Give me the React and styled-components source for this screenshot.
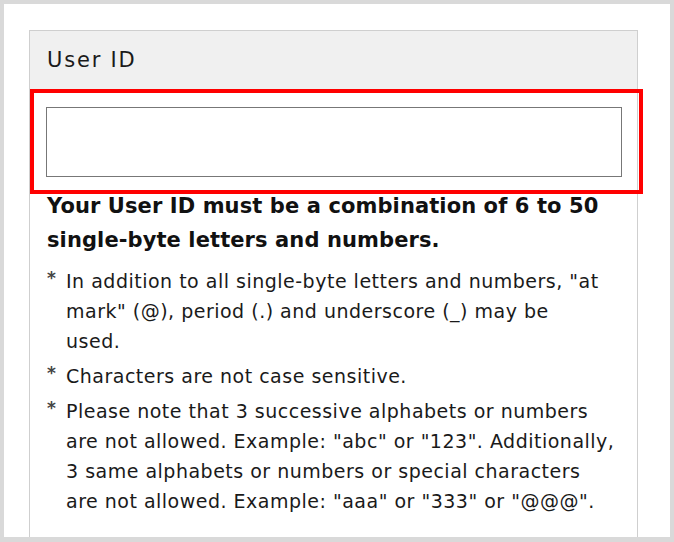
import styled, { createGlobalStyle } from "styled-components";

const GlobalStyle = createGlobalStyle`
  html, body {
    margin: 0;
    padding: 0;
    background: #fff;
  }
  * {
    box-sizing: border-box;
  }
`;

const Frame = styled.div`
  width: 674px;
  height: 542px;
  border: 4px solid #d9d9d9;
  border-bottom-width: 5px;
  background: #fff;
  padding: 26px 32px 0 25px;
  overflow: hidden;
`;

const Panel = styled.section`
  border: 1px solid #cfcfcf;
  border-bottom: none;
  height: 600px;
  font-family: "DejaVu Sans", Verdana, sans-serif;
  color: #111;
`;

const PanelHeader = styled.div`
  height: 58px;
  background: #f0f0f0;
  padding: 0 17px;
  display: flex;
  align-items: center;
  font-size: 21px;
  letter-spacing: 1.8px;
  color: #1a1a1a;
`;

const Highlight = styled.div`
  margin-right: -6px;
  border: 4px solid #ff0000;
  padding: 14px 17px 13px 12px;
`;

const TextInput = styled.input`
  display: block;
  width: 100%;
  height: 70px;
  border: 1.5px solid #777;
  background: #fff;
  outline: none;
`;

const Body = styled.div`
  padding: 0 17px;
`;

const Rule = styled.p`
  margin: -5px 0 0;
  font-size: 21px;
  font-weight: bold;
  line-height: 34px;
  letter-spacing: 0.1px;
`;

const Notes = styled.ul`
  list-style: none;
  margin: 9px 0 0;
  padding: 0;
  font-size: 19px;
  line-height: 30px;
  letter-spacing: 0.5px;
  color: #1a1a1a;
`;

const Note = styled.li`
  position: relative;
  padding-left: 19px;
  margin-bottom: 5px;

  &::before {
    content: "*";
    position: absolute;
    left: 0;
    top: -3px;
    font-size: 17px;
    font-weight: bold;
    color: #444;
  }
`;

export default function App() {
  return (
    <>
      <GlobalStyle />
      <Frame>
        <Panel>
          <PanelHeader>User ID</PanelHeader>
          <Highlight>
            <TextInput type="text" aria-label="User ID" />
          </Highlight>
          <Body>
            <Rule>
              Your User ID must be a combination of 6 to 50 single-byte letters
              and numbers.
            </Rule>
            <Notes>
              <Note>
                In addition to all single-byte letters and numbers, "at mark"
                (@), period (.) and underscore (_) may be
                <br />
                used.
              </Note>
              <Note>Characters are not case sensitive.</Note>
              <Note>
                Please note that 3 successive alphabets or numbers are not
                allowed. Example: "abc" or "123". Additionally, 3 same
                alphabets or numbers or special characters
                <br />
                are not allowed. Example: "aaa" or "333" or "@@@".
              </Note>
            </Notes>
          </Body>
        </Panel>
      </Frame>
    </>
  );
}
